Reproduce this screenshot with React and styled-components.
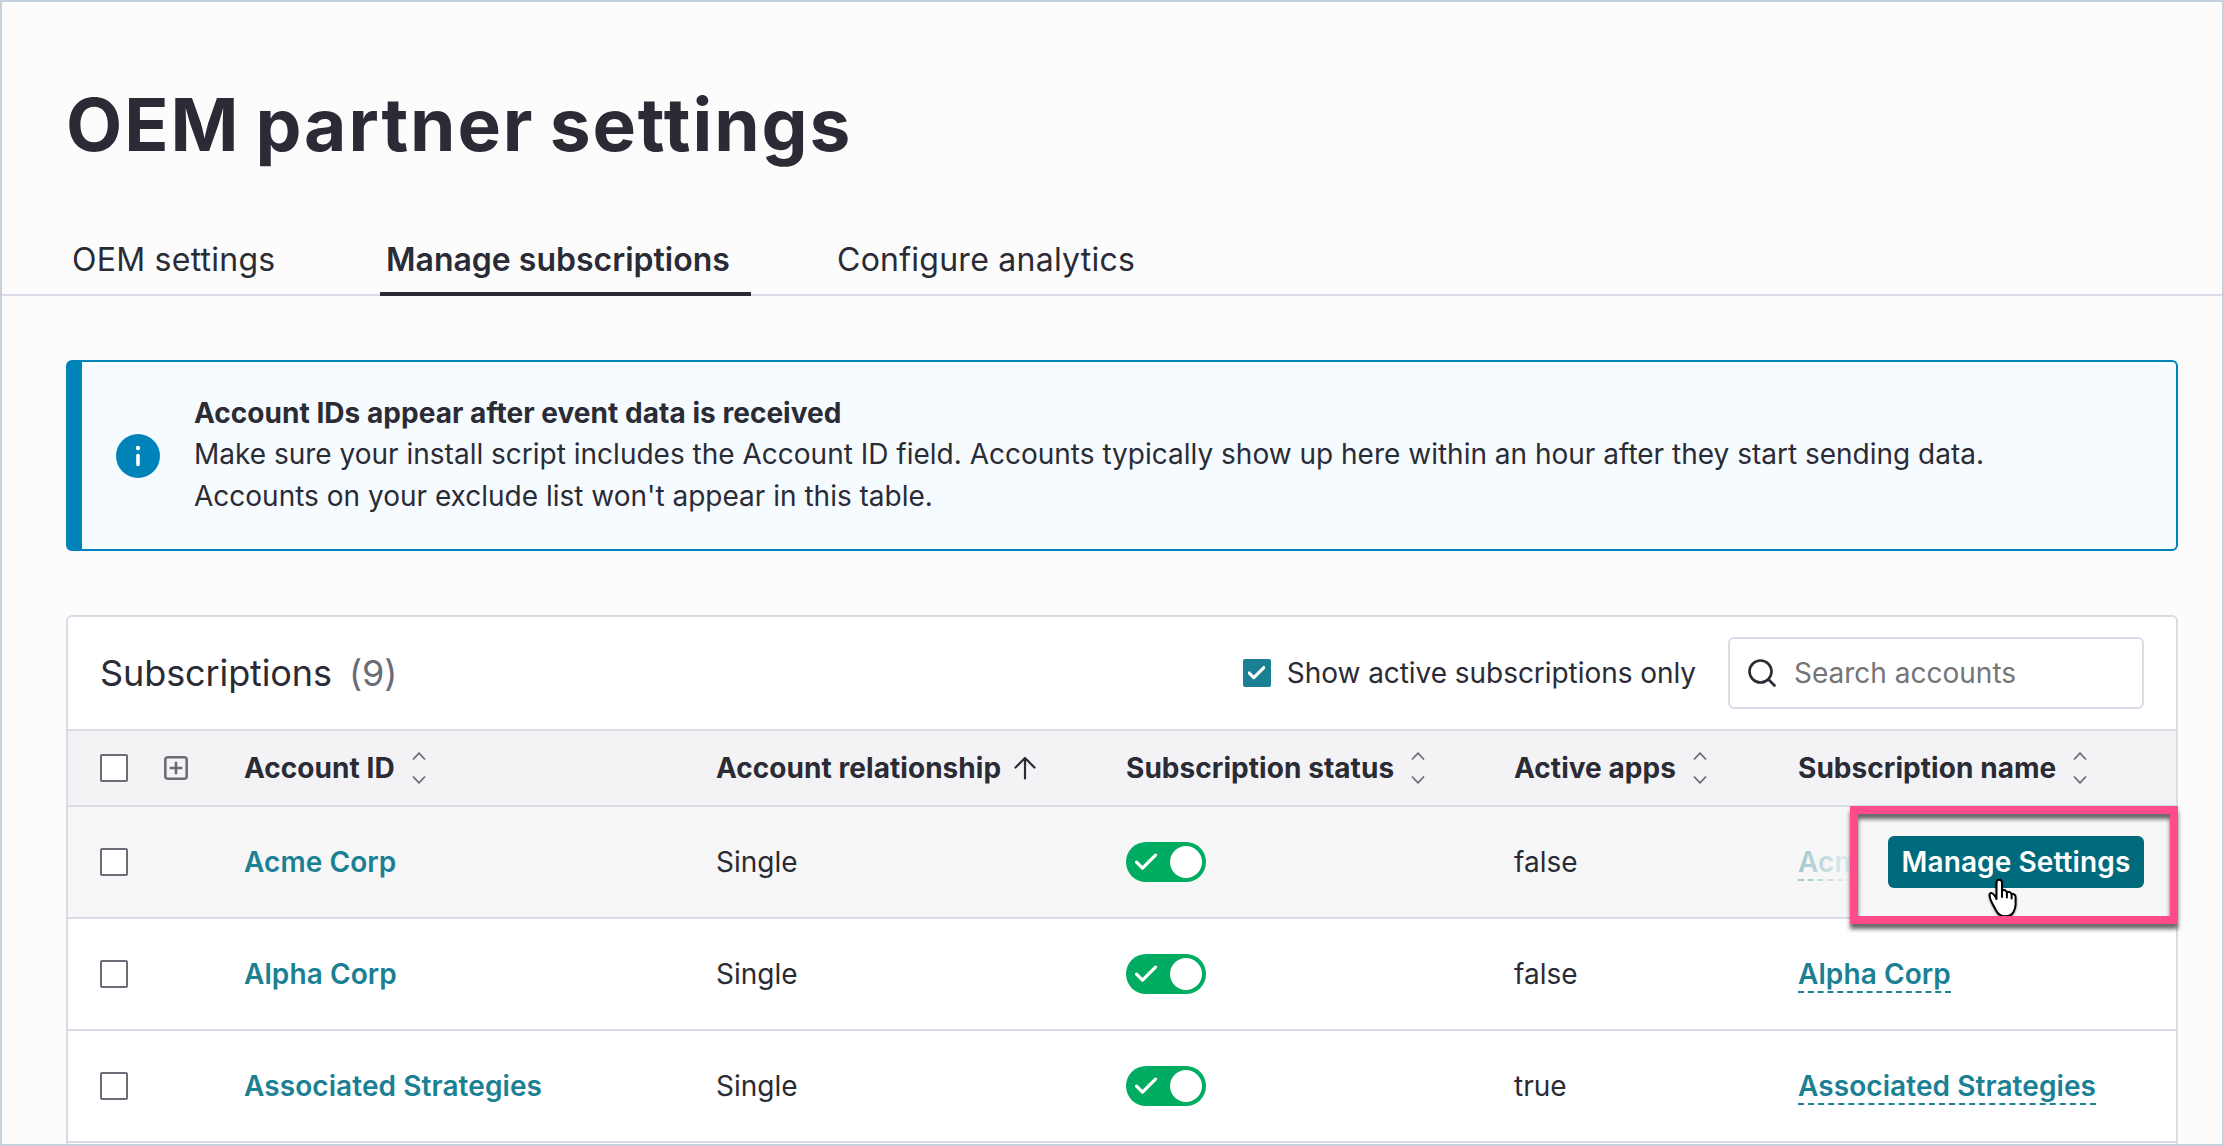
import { useState } from "react";
import styled, { createGlobalStyle, css } from "styled-components";

const colors = {
  text: "#2a2b35",
  muted: "#6b6c78",
  line: "#dadbe6",
  link: "#1b8093",
  button: "#006a7d",
  info: "#0083b8",
  green: "#00ac62",
  pink: "#ff4a8b",
};

const GlobalStyle = createGlobalStyle`
  *, *::before, *::after {
    box-sizing: border-box;
  }
  body {
    margin: 0;
    overflow: hidden;
    background: #fcfcfc;
  }
`;

// Page ---------------------------------------------------------
const Page = styled.div`
  width: 2224px;
  height: 1146px;
  overflow: hidden;
  border: 2px solid #c5d1dc;
  background: #fcfcfc;
  color: ${colors.text};
  font-family: Inter, "Liberation Sans", sans-serif;
  font-size: 28px;
  line-height: 42px;
  white-space: nowrap;
`;

const Title = styled.h1`
  margin: 0;
  padding: 75px 64px 0;
  font-size: 73px;
  line-height: 96px;
  font-weight: 650;
  letter-spacing: 1.9px;
  word-spacing: -4px;
`;

const Tabs = styled.nav`
  display: flex;
  height: 62px;
  margin-top: 61px;
  padding-left: 64px;
  border-bottom: 2px solid ${colors.line};
`;

const Tab = styled.a`
  height: 62px;
  width: ${(props) => props.$width}px;
  margin-right: 80px;
  padding: 6px 6px 0;
  font-size: 32px;
  line-height: 40px;
  letter-spacing: 0.25px;
  ${(props) =>
    props.$active &&
    css`
      border-bottom: 4px solid ${colors.text};
      font-weight: 600;
      letter-spacing: 0;
    `}
`;

const Content = styled.main`
  padding: 64px 44px 0 64px;
`;

// Info message -------------------------------------------------
const Message = styled.section`
  display: flex;
  align-items: center;
  height: 191px;
  padding-left: 34px;
  border: 2px solid ${colors.info};
  border-left-width: 16px;
  border-radius: 6px;
  background: #f6fbff;
`;

const InfoIcon = styled.svg`
  width: 44px;
  height: 44px;
  flex: none;
  margin-right: 34px;
`;

const MessageText = styled.p`
  margin: 0 0 3px;
`;

const MessageTitle = styled.strong`
  display: block;
  padding-top: 2px;
  font-weight: 700;
  line-height: 40px;
  letter-spacing: 0.04px;
`;

// Subscriptions table ------------------------------------------
const Panel = styled.section`
  margin-top: 64px;
  border: 2px solid ${colors.line};
  border-radius: 6px;
  background: #fff;
`;

const Toolbar = styled.header`
  display: flex;
  align-items: center;
  height: 112px;
  padding: 0 32px;
`;

const PanelTitle = styled.h2`
  margin: 0 auto 0 0;
  font-size: 36px;
  font-weight: 400;
  letter-spacing: -0.1px;
`;

const Count = styled.span`
  margin-left: 17px;
  color: ${colors.muted};
`;

const Filter = styled.label`
  display: flex;
  align-items: center;
  gap: 16px;
  margin-right: 32px;
  letter-spacing: -0.05px;
`;

const SearchBox = styled.div`
  display: flex;
  align-items: center;
  width: 416px;
  height: 72px;
  padding-left: 18px;
  border: 2px solid ${colors.line};
  border-radius: 6px;
`;

const SearchInput = styled.input`
  width: 340px;
  margin-left: 18px;
  padding: 0;
  border: 0;
  outline: 0;
  background: none;
  color: ${colors.text};
  font: inherit;
  &::placeholder {
    color: #757575;
    opacity: 1;
  }
`;

const Row = styled.div`
  position: relative;
  display: grid;
  grid-template-columns: 64px 80px 472px 410px 388px 284px 1fr;
  align-items: center;
  height: ${(props) => (props.$head ? 76 : 112)}px;
  padding-left: 32px;
  border-top: 2px solid ${colors.line};
  background: ${(props) => (props.$head ? "#f3f3f6" : props.$hover ? "#f7f7f7" : "#fff")};
`;

const HeadCell = styled.div`
  display: flex;
  align-items: center;
  gap: ${(props) => props.$gap || 17}px;
  font-weight: 700;
  letter-spacing: 0.05px;
`;

const CheckBox = styled.span`
  display: flex;
  align-items: center;
  justify-content: center;
  width: 28px;
  height: 28px;
  border: 2px solid ${(props) => (props.$checked ? colors.link : colors.muted)};
  border-radius: 2px;
  background: ${(props) => (props.$checked ? colors.link : "#fff")};
`;

const AccountLink = styled.a`
  grid-column: 3;
  color: ${colors.link};
  font-weight: 600;
  letter-spacing: 0.08px;
`;

const NameLink = styled.a`
  justify-self: start;
  margin-top: 2px;
  border-bottom: 2px dashed ${colors.link};
  color: ${colors.link};
  font-weight: 600;
  letter-spacing: 0.08px;
  line-height: 34px;
`;

const Toggle = styled.span`
  display: flex;
  align-items: center;
  justify-content: space-between;
  width: 80px;
  height: 40px;
  padding: 0 4px 0 9px;
  border-radius: 20px;
  background: ${colors.green};
`;

const Knob = styled.span`
  width: 32px;
  height: 32px;
  border-radius: 50%;
  background: #fff;
`;

// Hover actions cover the end of the row with a fade
const RowActions = styled.div`
  position: absolute;
  top: 0;
  right: 0;
  display: flex;
  align-items: center;
  justify-content: flex-end;
  width: 480px;
  height: 110px;
  padding-right: 32px;
  background: linear-gradient(90deg, #f7f7f700 0, #f7f7f7 168px);
`;

const ManageButton = styled.button`
  width: 256px;
  height: 52px;
  padding: 0;
  border: 0;
  border-radius: 6px;
  background: ${colors.button};
  color: #fff;
  font: inherit;
  font-weight: 600;
  letter-spacing: 0.1px;
`;

const Highlight = styled.div`
  position: absolute;
  top: -1px;
  right: -2px;
  width: 328px;
  height: 118px;
  z-index: 2;
  border: 8px solid ${colors.pink};
  filter: drop-shadow(0 5px 2px rgba(0, 0, 0, 0.6));
`;

const Cursor = styled.svg`
  position: absolute;
  top: 71px;
  right: 156px;
  width: 34px;
  height: 42px;
  z-index: 1;
  filter: drop-shadow(0 1px 1px rgba(0, 0, 0, 0.4));
`;

const SortIcon = () => (
  <svg width="14" height="32" viewBox="0 0 14 32" fill="none" stroke={colors.muted} strokeWidth="1.8">
    <path d="M1 7.5 7 1.2l6 6.3M1 24.5l6 6.3 6-6.3" />
  </svg>
);

const ArrowUpIcon = () => (
  <svg width="22" height="24" viewBox="0 0 22 24" fill="none" stroke={colors.text} strokeWidth="2.2" strokeLinecap="round" strokeLinejoin="round">
    <path d="M11 22.500V2M1.500 11.500 11 2l9.500 9.500" />
  </svg>
);

const ExpandIcon = () => (
  <svg width="24" height="24" viewBox="0 0 24 24" fill="none" stroke={colors.muted}>
    <rect x="1.300" y="1.300" width="21.400" height="21.400" rx="2.500" strokeWidth="2.6" />
    <path d="M12 6.800v10.400M6.800 12h10.400" strokeWidth="2.6" strokeLinecap="round" />
  </svg>
);

const SearchIcon = () => (
  <svg width="28" height="28" viewBox="0 0 28 28" fill="none" stroke={colors.text} strokeWidth="2.6" strokeLinecap="round">
    <circle cx="12.500" cy="12.500" r="11" />
    <path d="m20.500 20.500 6 6" />
  </svg>
);

const CheckIcon = ({ size = 22, strokeWidth = 3 }) => (
  <svg width={size} height={size * 0.78} viewBox="0 0 22 17" fill="none" stroke="#fff" strokeWidth={strokeWidth} strokeLinecap="round" strokeLinejoin="round">
    <path d="m1.500 9 6 6L20.500 2" />
  </svg>
);

const HandCursor = () => (
  <Cursor viewBox="0 0 34 42">
    <path
      d="M10.500 21V5c0-4.500 5.500-4.500 5.500 0v8c1.200-1.600 4.700-1 4.900 1.600 1.600-1.400 4.500-.6 4.700 1.800 1.700-1.200 4 0 4 2.800v7c0 3-.8 5-2 7.500-1.600 3.500-4 4.600-8.600 4.600-5 0-7.400-2.600-9.200-6.300-1.500-3.500-4.200-6.500-5.600-11.500-.8-3.500-1.200-5 .6-5.500 2.400-.6 4 2.500 5.700 6z"
      fill="#fff"
      stroke="#000"
      strokeWidth="2"
      strokeLinejoin="round"
    />
    <path d="M16 13v6M20.900 14.500v5M25.600 16.500v4" stroke="#000" strokeWidth="2" strokeLinecap="round" />
  </Cursor>
);

const tabs = [
  { label: "OEM settings", width: 234 },
  { label: "Manage subscriptions", width: 371 },
  { label: "Configure analytics", width: 320 },
];

const subscriptions = [
  { name: "Acme Corp", active: "false" },
  { name: "Alpha Corp", active: "false" },
  { name: "Associated Strategies", active: "true" },
];

function SubscriptionRow({ name, active, hover }) {
  return (
    <Row $hover={hover}>
      <CheckBox />
      <AccountLink>{name}</AccountLink>
      <span>Single</span>
      <Toggle>
        <CheckIcon strokeWidth={3.2} />
        <Knob />
      </Toggle>
      <span>{active}</span>
      <NameLink>{name}</NameLink>
      {hover && (
        <>
          <RowActions>
            <ManageButton>Manage Settings</ManageButton>
          </RowActions>
          <HandCursor />
          <Highlight />
        </>
      )}
    </Row>
  );
}

function App() {
  const [search, setSearch] = useState("");
  const [activeTab, setActiveTab] = useState("Manage subscriptions");

  return (
    <Page>
      <GlobalStyle />
      <Title>OEM partner settings</Title>
      <Tabs>
        {tabs.map((tab) => (
          <Tab
            key={tab.label}
            $width={tab.width}
            $active={tab.label === activeTab}
            onClick={() => setActiveTab(tab.label)}
          >
            {tab.label}
          </Tab>
        ))}
      </Tabs>
      <Content>
        <Message>
          <InfoIcon viewBox="0 0 44 44">
            <circle cx="22" cy="22" r="22" fill={colors.info} />
            <circle cx="22" cy="14" r="2.200" fill="#fff" />
            <path d="M22 21.500v9" stroke="#fff" strokeWidth="3.6" strokeLinecap="round" />
          </InfoIcon>
          <MessageText>
            <MessageTitle>Account IDs appear after event data is received</MessageTitle>
            Make sure your install script includes the Account ID field. Accounts typically show up here within an hour after they start sending data.
            <br />
            Accounts on your exclude list won't appear in this table.
          </MessageText>
        </Message>
        <Panel>
          <Toolbar>
            <PanelTitle>
              Subscriptions<Count>(9)</Count>
            </PanelTitle>
            <Filter>
              <CheckBox $checked>
                <CheckIcon size={17} strokeWidth={4} />
              </CheckBox>
              Show active subscriptions only
            </Filter>
            <SearchBox>
              <SearchIcon />
              <SearchInput
                placeholder="Search accounts"
                value={search}
                onChange={(event) => setSearch(event.target.value)}
              />
            </SearchBox>
          </Toolbar>
          <Row $head>
            <CheckBox />
            <ExpandIcon />
            <HeadCell>Account ID <SortIcon /></HeadCell>
            <HeadCell $gap={13}>Account relationship <ArrowUpIcon /></HeadCell>
            <HeadCell>Subscription status <SortIcon /></HeadCell>
            <HeadCell>Active apps <SortIcon /></HeadCell>
            <HeadCell>Subscription name <SortIcon /></HeadCell>
          </Row>
          {subscriptions.map((item, index) => (
            <SubscriptionRow key={item.name} {...item} hover={index === 0} />
          ))}
          <Row />
        </Panel>
      </Content>
    </Page>
  );
}

export default App;
